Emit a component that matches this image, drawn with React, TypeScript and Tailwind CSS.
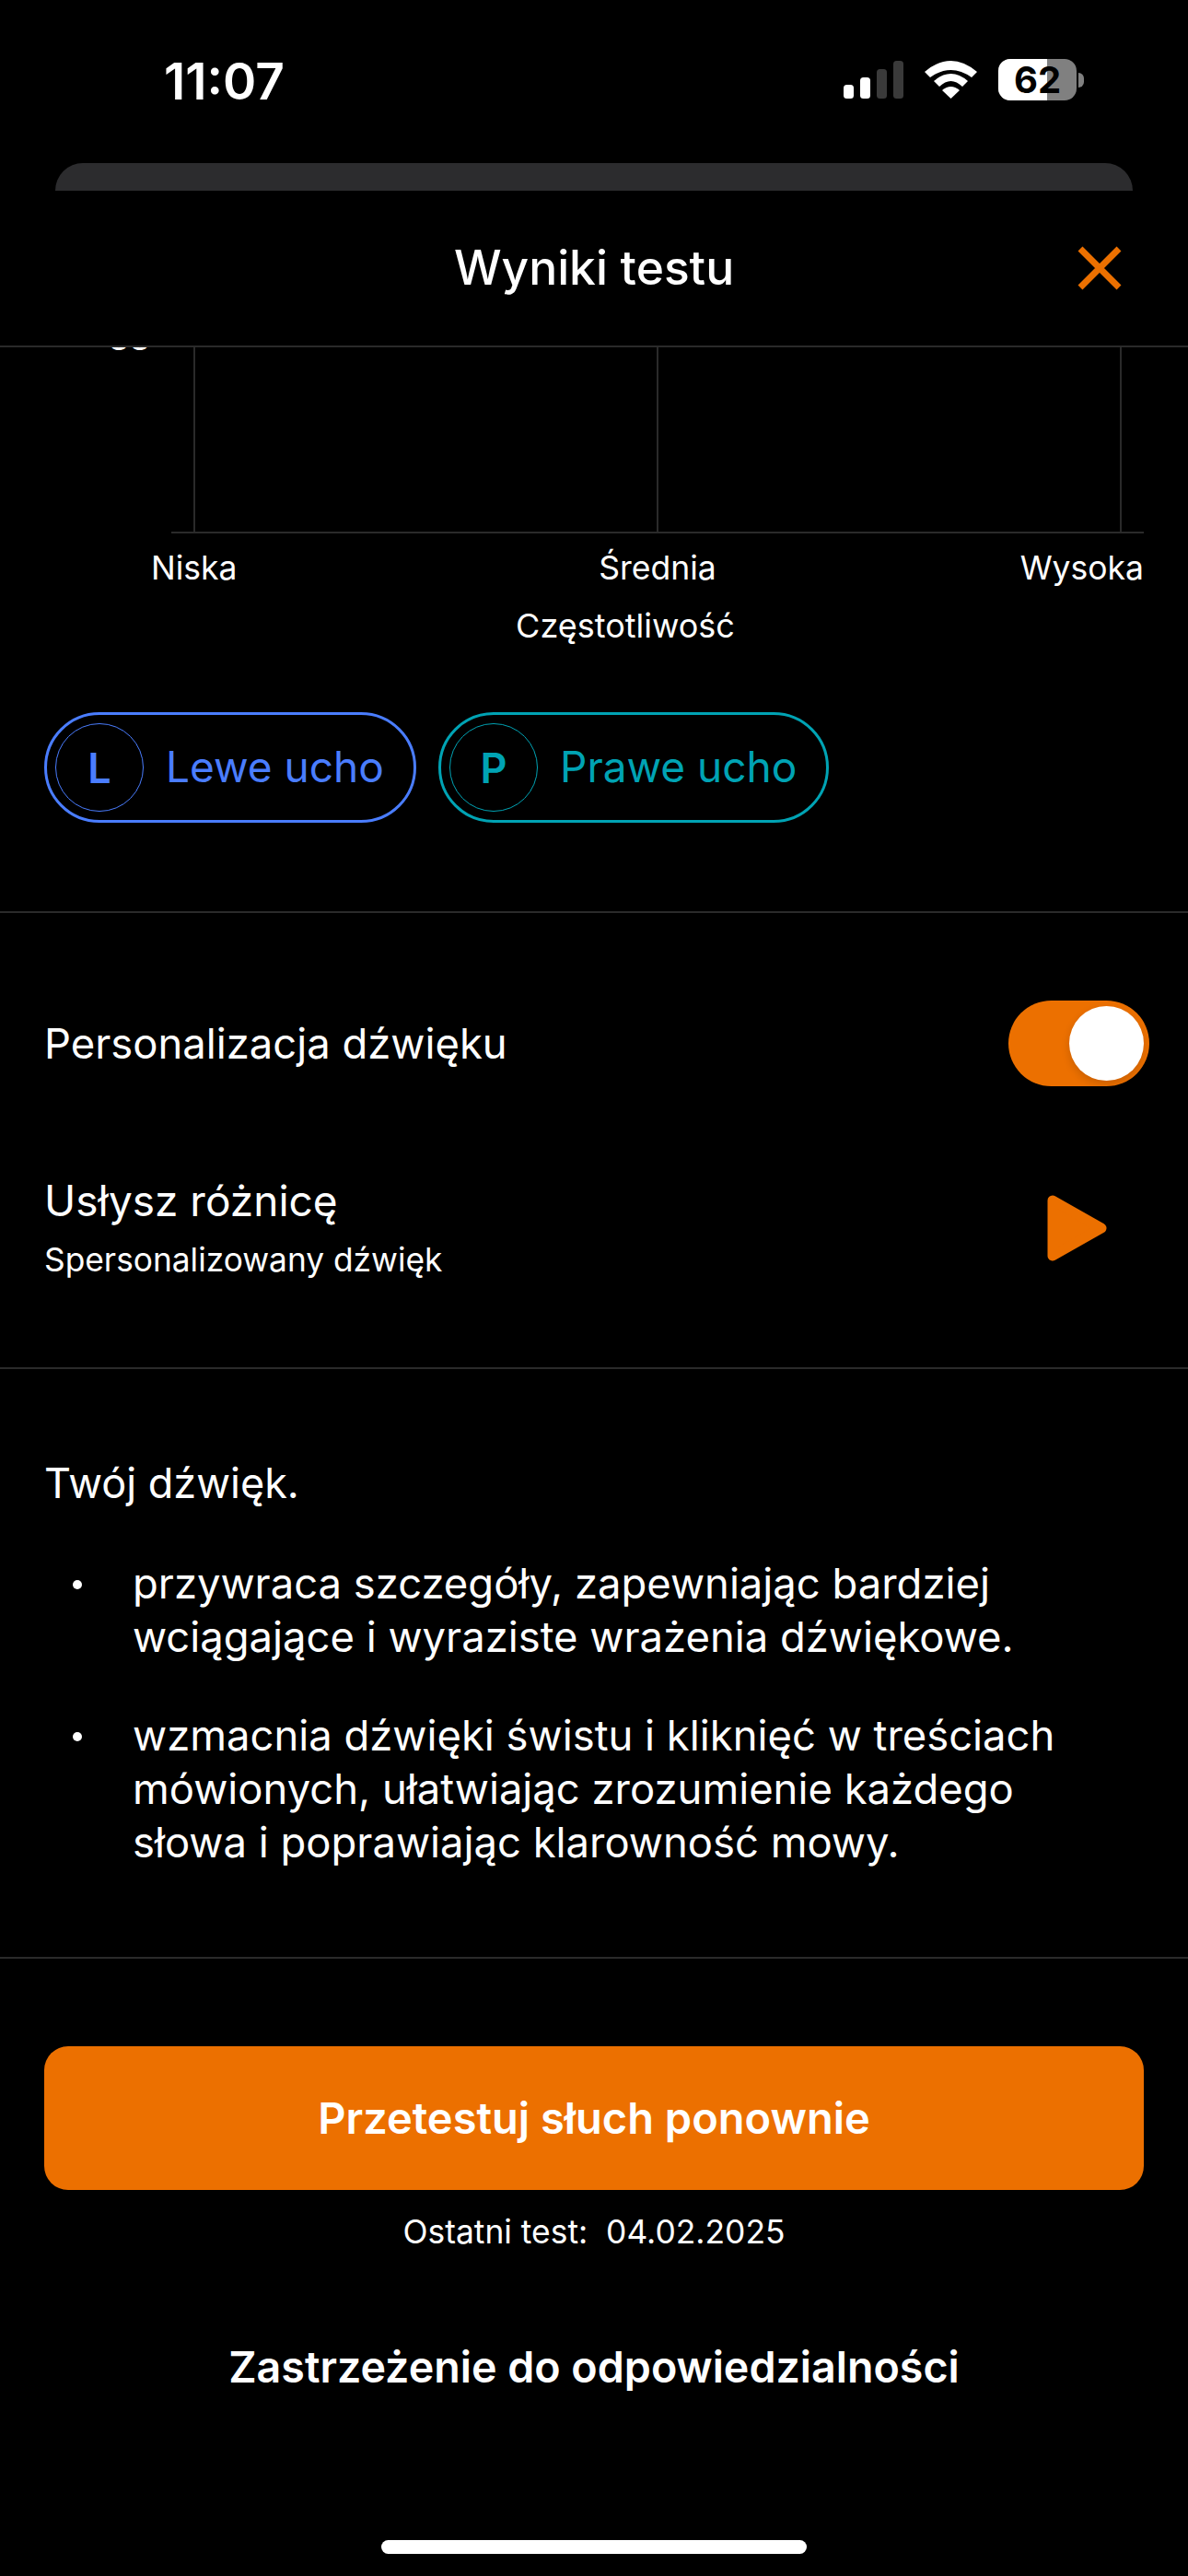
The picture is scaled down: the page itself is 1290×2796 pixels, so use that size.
import React from "react";

const font = { fontFamily: "Inter, 'Liberation Sans', sans-serif" };

function Divider() {
  return <div className="h-[2px] w-full bg-[#2a2a2a]" />;
}

function EarPill({ letter, label, tone, width }: { letter: string; label: string; tone: "blue" | "teal"; width: string }) {
  const blue = tone === "blue";
  return (
    <div className={`flex h-[120px] items-center rounded-[60px] border-[3px] pl-[9px] ${width} ${blue ? "border-[#4a7dff] text-[#4a7dff]" : "border-[#00a3b4] text-[#00a3b4]"}`}>
      <div className={`flex h-[96px] w-[96px] shrink-0 items-center justify-center rounded-full border text-[45px] font-semibold leading-none ${blue ? "border-[#4a7dff]" : "border-[#00a3b4]"}`}>{letter}</div>
      <span className="ml-[24px] mb-[2px] text-[46px] leading-none">{label}</span>
    </div>
  );
}

export default function App() {
  return (
    <div className="flex h-[2796px] w-[1290px] flex-col overflow-hidden bg-black text-white" style={font}>
      <div className="flex h-[177px] shrink-0 items-start justify-between pl-[178px] pr-[113px] pt-[58px]">
        <span className="text-[55px] font-semibold leading-[60px]">11:07</span>
        <div className="mt-[6px] flex items-center">
          <svg width="65" height="41" viewBox="0 0 65 41" className="mr-[23px]">
            <rect x="0" y="26" width="11" height="15" rx="3.5" fill="#fff" />
            <rect x="18" y="18" width="11" height="23" rx="3.5" fill="#fff" />
            <rect x="36" y="9" width="11" height="32" rx="3.5" fill="#3a3a3a" />
            <rect x="54" y="0" width="11" height="41" rx="3.5" fill="#3a3a3a" />
          </svg>
          <svg width="57" height="41" viewBox="0 0 57 41" className="mr-[23px]">
            <path d="M0 12 Q28.5 -12 57 12 L51 18 Q28.5 2 6 18 Z" fill="#fff" />
            <path d="M10 22 Q28.5 6 47 22 L41 28 Q28.5 16 16 28 Z" fill="#fff" />
            <path d="M19 32 Q28.5 24 38 32 L28.5 41 Z" fill="#fff" />
          </svg>
          <div className="relative flex h-[45px] w-[85px] items-center justify-center rounded-[13px] bg-[#808080]">
            <div className="absolute inset-y-0 left-0 w-[53px] rounded-l-[13px] bg-white" />
            <span className="relative text-[40px] font-bold leading-none text-black">62</span>
          </div>
          <div className="ml-[2px] h-[16px] w-[6px] rounded-r-full bg-[#808080]" />
        </div>
      </div>

      <div className="mx-[60px] h-[30px] shrink-0 rounded-t-[30px] bg-[#2c2c2e]" />

      <div className="relative flex h-[168px] shrink-0 items-center justify-center">
        <span className="text-[51.5px] font-medium leading-none">Wyniki testu</span>
        <svg width="48" height="48" viewBox="0 0 48 48" className="absolute left-[1170px] top-[60px]">
          <path d="M3 3 L45 45 M45 3 L3 45" stroke="#ec7000" strokeWidth="7" fill="none" />
        </svg>
      </div>
      <Divider />

      <div className="relative h-[202px] shrink-0 overflow-hidden">
        <div className="ml-[186px] mr-[48px] flex h-full justify-between border-b-[2px] border-[#2a2a2a] px-[24px]">
          <div className="h-full w-[2px] bg-[#2a2a2a]" />
          <div className="h-full w-[2px] bg-[#2a2a2a]" />
          <div className="h-full w-[2px] bg-[#2a2a2a]" />
        </div>
        <div className="absolute left-[118px] top-[-36px] text-[37px] leading-[36px]">gg</div>
      </div>

      <div className="relative mt-[16px] h-[44px] shrink-0 text-[35.5px] leading-[44px]">
        <span className="absolute left-[164px]">Niska</span>
        <span className="absolute left-[714px] -translate-x-1/2">Średnia</span>
        <span className="absolute right-[48px]">Wysoka</span>
      </div>
      <div className="mt-[18px] shrink-0 pl-[68px] text-center text-[36px] leading-[44px]">Częstotliwość</div>

      <div className="mt-[72px] flex shrink-0 gap-[24px] pl-[48px]">
        <EarPill letter="L" label="Lewe ucho" tone="blue" width="w-[404px]" />
        <EarPill letter="P" label="Prawe ucho" tone="teal" width="w-[424px]" />
      </div>

      <div className="mt-[96px] shrink-0"><Divider /></div>

      <div className="mt-[95px] flex h-[93px] shrink-0 items-center justify-between pl-[48px] pr-[42px]">
        <span className="text-[45.4px] leading-none">Personalizacja dźwięku</span>
        <div className="flex h-[93px] w-[153px] items-center justify-end rounded-full bg-[#ec7000] pr-[6px]">
          <div className="h-[81px] w-[81px] rounded-full bg-white shadow-[0_4px_10px_rgba(0,0,0,0.15)]" />
        </div>
      </div>

      <div className="mt-[96px] flex shrink-0 items-center justify-between pl-[48px] pr-[88px]">
        <div>
          <div className="text-[46px] leading-[56px]">Usłysz różnicę</div>
          <div className="mt-[15px] text-[35.3px] leading-[44px]">Spersonalizowany dźwięk</div>
        </div>
        <svg width="65" height="72" viewBox="0 0 65 72">
          <path d="M6 6 L59 36 L6 66 Z" fill="#ec7000" stroke="#ec7000" strokeWidth="11" strokeLinejoin="round" />
        </svg>
      </div>

      <div className="mt-[94px] shrink-0"><Divider /></div>

      <div className="mt-[95px] shrink-0 pl-[48px] text-[45px] leading-[58px]">Twój dźwięk.</div>
      <ul className="mt-[51px] shrink-0 pl-[144px] pr-[48px] text-[45.4px] leading-[58px]">
        <li className="relative">
          <span className="absolute left-[-65px] top-[25px] h-[10px] w-[10px] rounded-full bg-white" />
          przywraca szczegóły, zapewniając bardziej<br />wciągające i wyraziste wrażenia dźwiękowe.
        </li>
        <li className="relative mt-[49px]">
          <span className="absolute left-[-65px] top-[25px] h-[10px] w-[10px] rounded-full bg-white" />
          wzmacnia dźwięki świstu i kliknięć w treściach<br />mówionych, ułatwiając zrozumienie każdego<br />słowa i poprawiając klarowność mowy.
        </li>
      </ul>

      <div className="mt-[95px] shrink-0"><Divider /></div>

      <div className="mx-[48px] mt-[95px] flex h-[156px] shrink-0 items-center justify-center rounded-[26px] bg-[#ec7000] text-[47px] font-semibold">
        Przetestuj słuch ponownie
      </div>
      <div className="mt-[24px] shrink-0 text-center text-[35.4px] leading-[44px]">Ostatni test:&nbsp; 04.02.2025</div>
      <div className="mt-[95px] shrink-0 text-center text-[46.6px] font-semibold leading-[58px]">Zastrzeżenie do odpowiedzialności</div>

      <div className="mt-auto mb-[24px] h-[15px] w-[462px] shrink-0 self-center rounded-full bg-white" />
    </div>
  );
}
